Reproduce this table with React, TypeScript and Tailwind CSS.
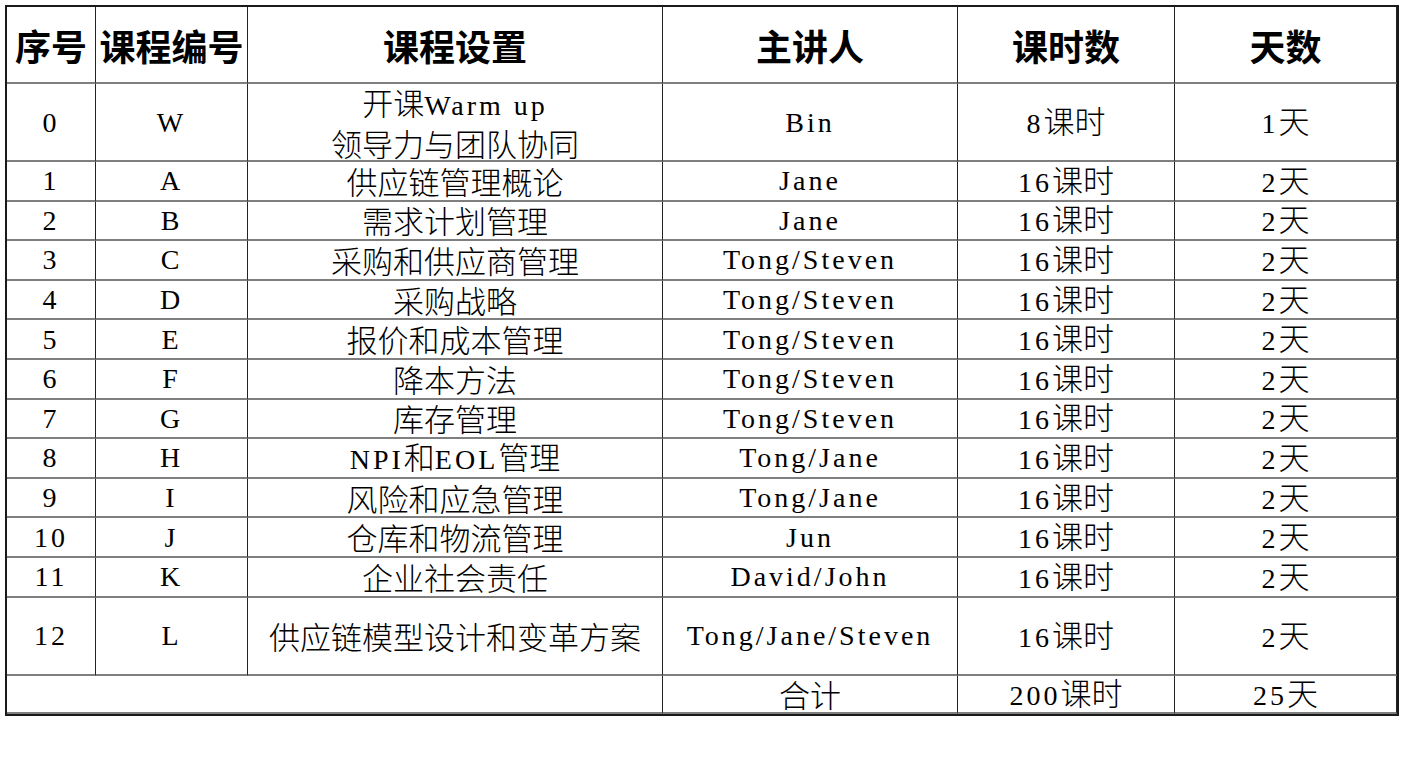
import React from "react";

type Row = { no: string; code: string; course: string[]; teacher: string; hours: string; days: string };

const rows: Row[] = [
  { no: "0", code: "W", course: ["开课Warm up", "领导力与团队协同"], teacher: "Bin", hours: "8课时", days: "1天" },
  { no: "1", code: "A", course: ["供应链管理概论"], teacher: "Jane", hours: "16课时", days: "2天" },
  { no: "2", code: "B", course: ["需求计划管理"], teacher: "Jane", hours: "16课时", days: "2天" },
  { no: "3", code: "C", course: ["采购和供应商管理"], teacher: "Tong/Steven", hours: "16课时", days: "2天" },
  { no: "4", code: "D", course: ["采购战略"], teacher: "Tong/Steven", hours: "16课时", days: "2天" },
  { no: "5", code: "E", course: ["报价和成本管理"], teacher: "Tong/Steven", hours: "16课时", days: "2天" },
  { no: "6", code: "F", course: ["降本方法"], teacher: "Tong/Steven", hours: "16课时", days: "2天" },
  { no: "7", code: "G", course: ["库存管理"], teacher: "Tong/Steven", hours: "16课时", days: "2天" },
  { no: "8", code: "H", course: ["NPI和EOL管理"], teacher: "Tong/Jane", hours: "16课时", days: "2天" },
  { no: "9", code: "I", course: ["风险和应急管理"], teacher: "Tong/Jane", hours: "16课时", days: "2天" },
  { no: "10", code: "J", course: ["仓库和物流管理"], teacher: "Jun", hours: "16课时", days: "2天" },
  { no: "11", code: "K", course: ["企业社会责任"], teacher: "David/John", hours: "16课时", days: "2天" },
  { no: "12", code: "L", course: ["供应链模型设计和变革方案"], teacher: "Tong/Jane/Steven", hours: "16课时", days: "2天" },
];

// latin runs are half-width in the original, so they get a serif face with some tracking
function Mixed({ text }: { text: string }) {
  const parts = text.split(/([\x20-\x7e]+)/).filter((p) => p !== "");
  return (
    <div className="whitespace-nowrap">
      {parts.map((p, i) =>
        /[\x20-\x7e]/.test(p) ? (
          <span key={i} className="font-['Liberation_Serif'] text-[28px] tracking-[3px] whitespace-pre">
            {p}
          </span>
        ) : (
          <span key={i}>{p}</span>
        )
      )}
    </div>
  );
}

const cell =
  "flex flex-col items-center justify-center text-center border-b-2 border-b-[#7f7f7f] border-r-[1.5px] border-r-[#222] leading-[32px]";

export default function App() {
  const headers = ["序号", "课程编号", "课程设置", "主讲人", "课时数", "天数"];
  return (
    <div className="min-h-screen w-full bg-white pt-[5px] pl-[5px] text-black font-['Noto_Sans_CJK_SC',sans-serif] font-light text-[31px]">
      <div className="grid w-fit border-2 border-[#1a1a1a] grid-cols-[89px_152px_415px_295px_217px_222px] grid-rows-[77px_78px_repeat(11,39.6px)_78px_38px]">
        {/* header */}
        {headers.map((h, i) => (
          <div
            key={h}
            className={`${cell} font-bold text-[36px] ${i === 5 ? "border-r-0" : ""}`}
          >
            {h}
          </div>
        ))}

        {/* body */}
        {rows.map((r, ri) => {
          const last = ri === rows.length - 1;
          const b = last ? "border-b-[#1a1a1a]" : "";
          return (
            <React.Fragment key={r.no}>
              <div className={`${cell} ${b} pb-[3px]`}>
                <Mixed text={r.no} />
              </div>
              <div className={`${cell} ${b} pb-[3px]`}>
                <Mixed text={r.code} />
              </div>
              <div className={`${cell} ${b} gap-[5px]`}>
                {r.course.map((c) => (
                  <Mixed key={c} text={c} />
                ))}
              </div>
              <div className={`${cell} ${b} pb-[3px]`}>
                <Mixed text={r.teacher} />
              </div>
              <div className={`${cell} ${b}`}>
                <Mixed text={r.hours} />
              </div>
              <div className={`${cell} ${b} border-r-0`}>
                <Mixed text={r.days} />
              </div>
            </React.Fragment>
          );
        })}

        {/* total */}
        <div className={`${cell} col-span-3 border-b-0`} />
        <div className={`${cell} border-b-0`}>合计</div>
        <div className={`${cell} border-b-0`}>
          <Mixed text="200课时" />
        </div>
        <div className={`${cell} border-b-0 border-r-0`}>
          <Mixed text="25天" />
        </div>
      </div>
    </div>
  );
}
